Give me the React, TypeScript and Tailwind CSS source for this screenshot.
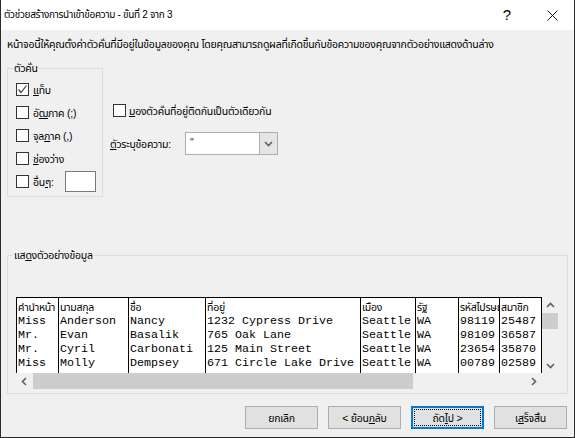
import React from 'react';

const ui = { fontFamily: '"Liberation Sans", "Noto Sans Thai", Tahoma, sans-serif' };
const mono = { fontFamily: '"Liberation Mono", "Courier New", monospace' };

function Box({ checked = false }: { checked?: boolean }) {
  return (
    <div className="w-[13px] h-[13px] shrink-0 border border-[#333333] bg-white flex items-center justify-center">
      {checked && (
        <svg width="11" height="11" viewBox="0 0 11 11">
          <polyline points="1.5,5.5 4,8.5 9.5,1.5" fill="none" stroke="#3c3c3c" strokeWidth="1.2" />
        </svg>
      )}
    </div>
  );
}

function Chevron({ dir }: { dir: 'up' | 'down' | 'left' | 'right' }) {
  const pts = {
    up: '1,5 4.5,1.5 8,5',
    down: '1,2 4.5,5.5 8,2',
    left: '5,1 1.5,4.5 5,8',
    right: '2,1 5.5,4.5 2,8',
  }[dir];
  const vertical = dir === 'up' || dir === 'down';
  return (
    <svg width={vertical ? 9 : 7} height={vertical ? 7 : 9} viewBox={vertical ? '0 0 9 7' : '0 0 7 9'}>
      <polyline points={pts} fill="none" stroke="#606060" strokeWidth="1.6" />
    </svg>
  );
}

const columns = [
  { head: 'คำนำหน้า', w: 'w-[42px]', rows: ['Miss', 'Mr.', 'Mr.', 'Miss'] },
  { head: 'นามสกุล', w: 'w-[70px]', rows: ['Anderson', 'Evan', 'Cyril', 'Molly'] },
  { head: 'ชื่อ', w: 'w-[77px]', rows: ['Nancy', 'Basalik', 'Carbonati', 'Dempsey'] },
  { head: 'ที่อยู่', w: 'w-[155px]', rows: ['1232 Cypress Drive', '765 Oak Lane', '125 Main Street', '671 Circle Lake Drive'] },
  { head: 'เมือง', w: 'w-[55px]', rows: ['Seattle', 'Seattle', 'Seattle', 'Seattle'] },
  { head: 'รัฐ', w: 'w-[43px]', rows: ['WA', 'WA', 'WA', 'WA'] },
  { head: 'รหัสไปรษณีย์', w: 'w-[41px]', rows: ['98119', '98109', '23654', '00789'] },
  { head: 'สมาชิก', w: 'w-[43px] border-r', rows: ['25487', '36587', '35870', '02589'] },
];

function Button({ children, focused = false }: { children: React.ReactNode; focused?: boolean }) {
  if (focused) {
    return (
      <div className="w-[73px] h-[23px] border-2 border-[#0078d7] bg-[#e1e1e1] flex">
        <div className="flex-1 m-px border border-dotted border-black flex items-center justify-center">
          {children}
        </div>
      </div>
    );
  }
  return (
    <div className="w-[73px] h-[23px] border border-[#adadad] bg-[#e1e1e1] flex items-center justify-center">
      {children}
    </div>
  );
}

export default function App() {
  return (
    <div
      className="w-[575px] h-[438px] bg-[#f0f0f0] border-x border-b border-[#2b2b2b] flex flex-col text-[10.5px] tracking-[-0.25px] text-black leading-[14px]"
      style={ui}
    >
      {/* title bar */}
      <div className="h-[30px] bg-white flex items-center pl-[3px] shrink-0">
        <span className="flex-1 text-[10px] tracking-[-0.3px]">ตัวช่วยสร้างการนำเข้าข้อความ - ขั้นที่ 2 จาก 3</span>
        <span className="text-[15px] tracking-normal mr-[36px]">?</span>
        <svg width="11" height="11" viewBox="0 0 11 11" className="mr-[16px]">
          <path d="M0.5 0.5 L10.5 10.5 M10.5 0.5 L0.5 10.5" stroke="#111" strokeWidth="1" />
        </svg>
      </div>

      <div className="flex flex-col px-[6px]">
        <div className="mt-[7px] h-[14px] whitespace-nowrap">
          หน้าจอนี้ให้คุณตั้งค่าตัวคั่นที่มีอยู่ในข้อมูลของคุณ โดยคุณสามารถดูผลที่เกิดขึ้นกับข้อความของคุณจากตัวอย่างแสดงด้านล่าง
        </div>

        <div className="mt-[17px] flex">
          {/* delimiters group */}
          <div className="relative w-[96px] h-[129px] border border-[#dcdcdc] pl-[8px] pt-[14px] flex flex-col gap-[10px]">
            <span className="absolute -top-[8px] left-[5px] px-px bg-[#f0f0f0]">ตัวคั่น</span>
            <div className="h-[13px] flex items-center gap-[4px]">
              <Box checked />
              <span><u>แ</u>ท็บ</span>
            </div>
            <div className="h-[13px] flex items-center gap-[4px]">
              <Box />
              <span>อั<u>ฒ</u>ภาค (;)</span>
            </div>
            <div className="h-[13px] flex items-center gap-[4px]">
              <Box />
              <span>จุล<u>ภ</u>าค (,)</span>
            </div>
            <div className="h-[13px] flex items-center gap-[4px]">
              <Box />
              <span><u>ช่</u>องว่าง</span>
            </div>
            <div className="h-[13px] flex items-center gap-[4px]">
              <Box />
              <span>อื่น<u>ๆ</u>:</span>
              <div className="ml-auto mr-[6px] w-[31px] h-[21px] shrink-0 border border-[#7a7a7a] bg-white" />
            </div>
          </div>

          {/* right options */}
          <div className="ml-[7px] pt-[36px] flex flex-col">
            <div className="ml-[3px] h-[13px] flex items-center gap-[3px]">
              <Box />
              <span className="whitespace-nowrap"><u>ม</u>องตัวคั่นที่อยู่ติดกันเป็นตัวเดียวกัน</span>
            </div>
            <div className="mt-[15px] flex items-center">
              <span className="w-[75px] whitespace-nowrap"><u>ตั</u>วระบุข้อความ:</span>
              <div className="w-[93px] h-[23px] border border-[#adadad] bg-white flex">
                <span className="flex-1 pl-[4px] pt-[2px] text-[#222]">"</span>
                <div className="w-[18px] bg-[#e5e5e5] border-l border-[#adadad] flex items-center justify-center">
                  <Chevron dir="down" />
                </div>
              </div>
            </div>
          </div>
        </div>

        {/* preview group */}
        <div className="relative mt-[58px] w-[561px] h-[139px] border border-[#dcdcdc] pl-[8px] pt-[41px]">
          <span className="absolute -top-[8px] left-[5px] px-px bg-[#f0f0f0]">แส<u>ด</u>งตัวอย่างข้อมูล</span>
          <div className="w-[542px] flex flex-col">
            <div className="h-[76px] flex">
              <div className="w-[526px] border-t border-black bg-white flex">
                {columns.map((c) => (
                  <div key={c.head} className={`${c.w} shrink-0 border-l border-black flex flex-col overflow-hidden pt-[2px]`}>
                    <div className="h-[14px] pl-px whitespace-nowrap">{c.head}</div>
                    {c.rows.map((r, i) => (
                      <div key={i} className="h-[14px] pl-px whitespace-nowrap text-[11.67px] tracking-normal leading-[14px]" style={mono}>
                        {r}
                      </div>
                    ))}
                  </div>
                ))}
              </div>
              <div className="w-[16px] flex flex-col">
                <div className="h-[16px] flex items-center justify-center">
                  <Chevron dir="up" />
                </div>
                <div className="h-[16px] bg-[#cdcdcd]" />
                <div className="flex-1" />
                <div className="h-[16px] flex items-center justify-center">
                  <Chevron dir="down" />
                </div>
              </div>
            </div>
            <div className="h-[16px] flex">
              <div className="w-[17px] flex items-center justify-center">
                <Chevron dir="left" />
              </div>
              <div className="w-[380px] bg-[#cdcdcd]" />
              <div className="flex-1" />
              <div className="w-[17px] flex items-center justify-center">
                <Chevron dir="right" />
              </div>
              <div className="w-[16px]" />
            </div>
          </div>
        </div>

        {/* buttons */}
        <div className="mt-[12px] flex justify-end pr-[1px] gap-[10px]">
          <Button>ยกเลิก</Button>
          <Button>&lt; ย้อน<u>ก</u>ลับ</Button>
          <Button focused>ถัด<u>ไ</u>ป &gt;</Button>
          <Button>เ<u>ส</u>ร็จสิ้น</Button>
        </div>
      </div>
    </div>
  );
}
